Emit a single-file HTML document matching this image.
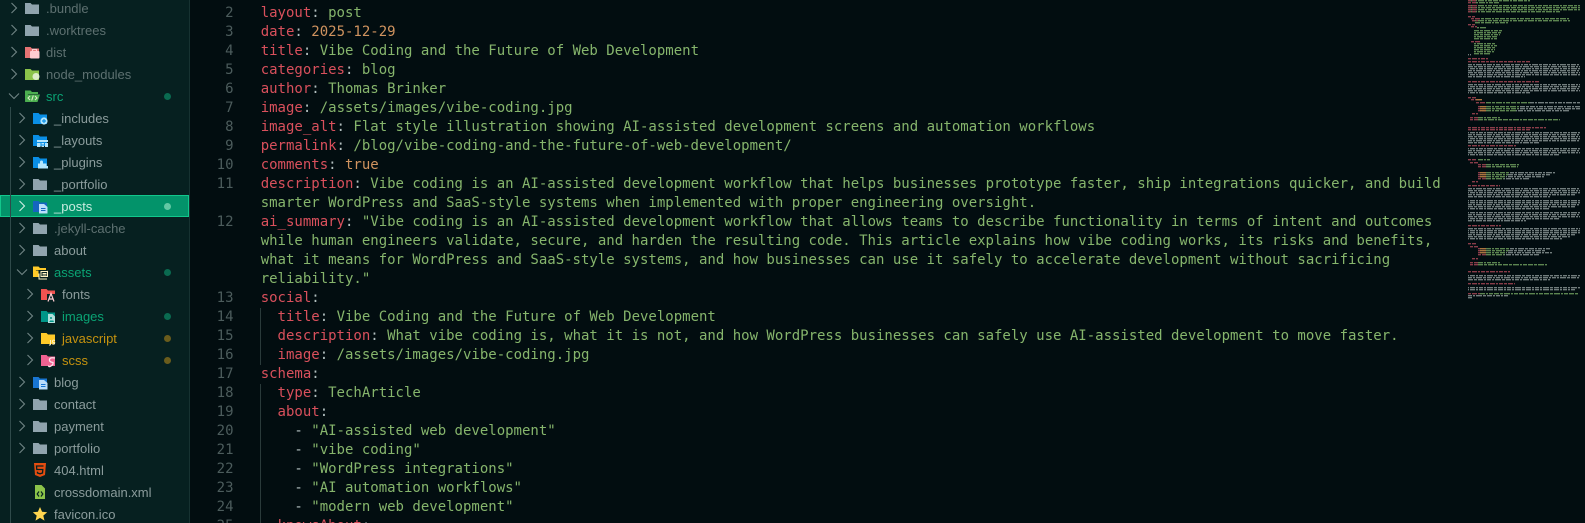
<!DOCTYPE html>
<html><head><meta charset="utf-8"><style>
html,body{margin:0;padding:0;width:1585px;height:523px;overflow:hidden;background:#020d10}
#side{position:absolute;left:0;top:0;width:189px;height:523px;background:#062020;border-right:1px solid #163231;overflow:hidden;font:13px "Liberation Sans",sans-serif;color:#8b9c9c}
.r{position:absolute;left:0;width:189px;height:22px;line-height:22px;white-space:pre;top:calc(var(--i)*22px - 3px)}
.r>svg{position:absolute;top:3px;width:16px;height:16px}
.r>svg.c{width:12px;height:12px;top:5px;fill:none;stroke:#708585;stroke-width:1.1}
.r span{position:absolute;top:1px}
.l0 .c{left:8px}.l0 .f{left:24px}.l0 span{left:46px}
.l1 .c{left:16px}.l1 .f{left:32px}.l1 span{left:54px}
.l2 .c{left:24px}.l2 .f{left:40px}.l2 span{left:62px}
.d{position:absolute;left:164px;top:7.5px;width:7px;height:7px;border-radius:50%}
.g .d{background:#0a6a50}.y .d{background:#6a5c1c}
.g span{color:#0aa374}.y span{color:#c5920f}.i span{color:#5d7070}
.sel{background:#03936a;outline:1px solid #12c78c;outline-offset:-1px;height:22px;color:#c8ece0}
.sel span{color:#c8ece0}.sel .d{background:#62c8a4}.sel>svg.c{stroke:#d0efe5}
#guide{position:absolute;left:10px;top:107px;width:1px;height:416px;background:#2f4a4a}
#ed{position:absolute;left:190px;top:0;width:1395px;height:523px;background:#020d10;overflow:hidden}
.n,.t{position:absolute;font:14px/19px "DejaVu Sans Mono",monospace;white-space:pre;top:calc(var(--i)*19px + 4px)}
.n{left:0;width:43.5px;text-align:right;color:#4c5c5c}
.t{left:70.7px;color:#86b56c}
.t b{font-weight:400;color:#d9505c}.t u{text-decoration:none;color:#b3c0c0}.t i{font-style:normal;color:#d0935f}
.ig{position:absolute;left:70px;width:1px;background:#2a3a3a}
#mini{position:absolute;left:0;top:0;filter:blur(.35px)}
</style></head><body>
<svg width="0" height="0" style="position:absolute"><defs>
<symbol id="fd" viewBox="0 0 16 16"><path d="M1 3h5.500l1.500 1.500h7v9.500H1z"/></symbol>
<symbol id="ch" viewBox="0 0 12 12"><path d="M3.500 1l5 5-5 5"/></symbol>
<symbol id="ex" viewBox="0 0 12 12"><path d="M1 3.500l5 5 5-5"/></symbol>
</defs></svg>
<div id="side">
<div class="r l0 i" style="--i:0"><svg class="c"><use href="#ch"/></svg><svg class="f" fill="#90a4ae"><use href="#fd"/></svg><span>.bundle</span></div>
<div class="r l0 i" style="--i:1"><svg class="c"><use href="#ch"/></svg><svg class="f" fill="#90a4ae"><use href="#fd"/></svg><span>.worktrees</span></div>
<div class="r l0 i" style="--i:2"><svg class="c"><use href="#ch"/></svg><svg class="f" viewBox="0 0 16 16"><path fill="#e57373" d="M1 3h5.500l1.500 1.500h7v9.500H1z"/><rect x="6" y="7" width="9.500" height="7.500" rx="1" fill="#ffcdd2"/><path d="M8.500 7V5.500h4V7" fill="none" stroke="#ffcdd2" stroke-width="1.200"/></svg><span>dist</span></div>
<div class="r l0 i" style="--i:3"><svg class="c"><use href="#ch"/></svg><svg class="f" viewBox="0 0 16 16"><path fill="#8bc34a" d="M1 3h5.500l1.500 1.500h7v9.500H1z"/><circle cx="12" cy="10.500" r="3.500" fill="#dcedc8"/></svg><span>node_modules</span></div>
<div class="r l0 g" style="--i:4"><svg class="c"><use href="#ex"/></svg><svg class="f" viewBox="0 0 16 16"><path fill="#4caf50" d="M1 2.500h5.500L8 4h6v2H4L1 14z"/><path fill="#4caf50" d="M3.500 6.500H16L13.500 14H1z"/><path d="M6 8l-2 2 2 2M11 8l2 2-2 2M9.300 7.500L7.700 12.500" fill="none" stroke="#dcedc8" stroke-width="1.100"/></svg><span>src</span><i class="d"></i></div>
<div class="r l1" style="--i:5"><svg class="c"><use href="#ch"/></svg><svg class="f" viewBox="0 0 16 16"><path fill="#0a8fe6" d="M1 3h5.500l1.500 1.500h7v9.500H1z"/><circle cx="12" cy="11" r="3.600" fill="#b3e5fc"/><path d="M10 11h4M12 9v4" stroke="#0a8fe6" stroke-width="1.200"/></svg><span>_includes</span></div>
<div class="r l1" style="--i:6"><svg class="c"><use href="#ch"/></svg><svg class="f" viewBox="0 0 16 16"><path fill="#0a8fe6" d="M1 3h5.500l1.500 1.500h7v9.500H1z"/><path fill="#b3e5fc" d="M5 8h11v2H5zM5 11h3.500v4H5zM9.500 11H12v1.500H9.500zM13 11h3v4h-3zM9.500 13.500H12V15H9.500z"/></svg><span>_layouts</span></div>
<div class="r l1" style="--i:7"><svg class="c"><use href="#ch"/></svg><svg class="f" viewBox="0 0 16 16"><path fill="#0a8fe6" d="M1 3h5.500l1.500 1.500h7v9.500H1z"/><path fill="#b3e5fc" d="M6 9.500h2V8a1.500 1.500 0 013 0v1.500h3.500V12H16v2.500H6z"/></svg><span>_plugins</span></div>
<div class="r l1" style="--i:8"><svg class="c"><use href="#ch"/></svg><svg class="f" fill="#90a4ae"><use href="#fd"/></svg><span>_portfolio</span></div>
<div class="r l1 sel" style="--i:9"><svg class="c"><use href="#ch"/></svg><svg class="f" viewBox="0 0 16 16"><path fill="#1565c0" d="M1 3h5.500l1.500 1.500h7v9.500H1z"/><path fill="#bbdefb" d="M7 6h5l3.500 3v6.500H7z"/><path d="M9 10.500h4.500M9 12.500h4.500" stroke="#1565c0"/></svg><span>_posts</span><i class="d"></i></div>
<div class="r l1 i" style="--i:10"><svg class="c"><use href="#ch"/></svg><svg class="f" fill="#90a4ae"><use href="#fd"/></svg><span>.jekyll-cache</span></div>
<div class="r l1" style="--i:11"><svg class="c"><use href="#ch"/></svg><svg class="f" fill="#90a4ae"><use href="#fd"/></svg><span>about</span></div>
<div class="r l1 g" style="--i:12"><svg class="c"><use href="#ex"/></svg><svg class="f" viewBox="0 0 16 16"><path fill="#ffca28" d="M1 2.500h5.500L8 4h6v2H4L1 13zM3.500 6.500H16l-2 6.500H1z"/><rect x="6.500" y="6" width="9" height="9" fill="#062020"/><path d="M7 9.500v5.500h8M9 7.500h6.500v5H9z" fill="none" stroke="#fff3c4"/><path d="M10.500 9.500h4M10.500 11h4" stroke="#fff3c4"/></svg><span>assets</span><i class="d"></i></div>
<div class="r l2" style="--i:13"><svg class="c"><use href="#ch"/></svg><svg class="f" viewBox="0 0 16 16"><path fill="#ef5350" d="M1 3h5.500l1.500 1.500h7v9.500H1z"/><path fill="#062020" d="M7 8h8v8H7z"/><path d="M8 15.500l3-8 3 8M9 13h4" fill="none" stroke="#ffcdd2" stroke-width="1.200"/></svg><span>fonts</span></div>
<div class="r l2 g" style="--i:14"><svg class="c"><use href="#ch"/></svg><svg class="f" viewBox="0 0 16 16"><path fill="#009688" d="M1 3h5.500l1.500 1.500h7v9.500H1z"/><path fill="#b2dfdb" d="M8 6h4.500L15 8.500V15H8z"/><circle cx="11" cy="10" r="1" fill="#009688"/><path d="M9 14l2-2 1 1 1-1 1 2" fill="#009688"/></svg><span>images</span><i class="d"></i></div>
<div class="r l2 y" style="--i:15"><svg class="c"><use href="#ch"/></svg><svg class="f" viewBox="0 0 16 16"><path fill="#ffca28" d="M1 3h5.500l1.500 1.500h7v9.500H1z"/><path d="M10.500 10v4.200q0 1-1.500.8M15 10.500q-2.500-1-2.500.8t2.200 1.400q0 2-2.400 1.300" fill="none" stroke="#fff3c4" stroke-width="1"/></svg><span>javascript</span><i class="d"></i></div>
<div class="r l2 y" style="--i:16"><svg class="c"><use href="#ch"/></svg><svg class="f" viewBox="0 0 16 16"><path fill="#f06292" d="M1 3h5.500l1.500 1.500h7v9.500H1z"/><path d="M15 6q-5-1-5.500 1.500T13 10.500q.5 2.500-3 4-1.500.3-1.500-1" fill="none" stroke="#fce4ec" stroke-width="1.300"/></svg><span>scss</span><i class="d"></i></div>
<div class="r l1" style="--i:17"><svg class="c"><use href="#ch"/></svg><svg class="f" viewBox="0 0 16 16"><path fill="#1976d2" d="M1 3h5.500l1.500 1.500h7v9.500H1z"/><path fill="#bbdefb" d="M7 6h5l3.500 3v6.500H7z"/><path d="M9 10.500h4.500M9 12.500h4.500" stroke="#1976d2"/></svg><span>blog</span></div>
<div class="r l1" style="--i:18"><svg class="c"><use href="#ch"/></svg><svg class="f" fill="#90a4ae"><use href="#fd"/></svg><span>contact</span></div>
<div class="r l1" style="--i:19"><svg class="c"><use href="#ch"/></svg><svg class="f" fill="#90a4ae"><use href="#fd"/></svg><span>payment</span></div>
<div class="r l1" style="--i:20"><svg class="c"><use href="#ch"/></svg><svg class="f" fill="#90a4ae"><use href="#fd"/></svg><span>portfolio</span></div>
<div class="r l1" style="--i:21"><svg class="f" viewBox="0 0 16 16"><path fill="#e44d10" d="M2 1h12l-1 12-5 2-5-2z"/><path d="M11.500 4h-7l.3 3.500h6l-.3 3.500-2.500.8-2.500-.8-.1-1.300" fill="none" stroke="#062020" stroke-width="1.300"/></svg><span>404.html</span></div>
<div class="r l1" style="--i:22"><svg class="f" viewBox="0 0 16 16"><path fill="#8bc34a" d="M3 1h6.500L13 4.500V15H3z"/><path d="M7 7.500L5.200 10 7 12.500M9 7.500l1.800 2.500L9 12.500" fill="none" stroke="#062020" stroke-width="1.200"/></svg><span>crossdomain.xml</span></div>
<div class="r l1" style="--i:23"><svg class="f" viewBox="0 0 16 16"><path fill="#ffd54f" d="M8 1l2.100 4.700 5.100.5-3.900 3.400 1.200 5L8 11.900l-4.500 2.700 1.200-5L.8 6.200l5.100-.5z"/></svg><span>favicon.ico</span></div>
<div id="guide"></div>
</div>
<div id="ed">
<div class="ig" style="top:308px;height:57px"></div><div class="ig" style="top:384px;height:139px"></div>
<div class="n" style="--i:0">2</div><div class="t" style="--i:0"><b>layout</b><u>:</u> post</div>
<div class="n" style="--i:1">3</div><div class="t" style="--i:1"><b>date</b><u>:</u> <i>2025-12-29</i></div>
<div class="n" style="--i:2">4</div><div class="t" style="--i:2"><b>title</b><u>:</u> Vibe Coding and the Future of Web Development</div>
<div class="n" style="--i:3">5</div><div class="t" style="--i:3"><b>categories</b><u>:</u> blog</div>
<div class="n" style="--i:4">6</div><div class="t" style="--i:4"><b>author</b><u>:</u> Thomas Brinker</div>
<div class="n" style="--i:5">7</div><div class="t" style="--i:5"><b>image</b><u>:</u> /assets/images/vibe-coding.jpg</div>
<div class="n" style="--i:6">8</div><div class="t" style="--i:6"><b>image_alt</b><u>:</u> Flat style illustration showing AI-assisted development screens and automation workflows</div>
<div class="n" style="--i:7">9</div><div class="t" style="--i:7"><b>permalink</b><u>:</u> /blog/vibe-coding-and-the-future-of-web-development/</div>
<div class="n" style="--i:8">10</div><div class="t" style="--i:8"><b>comments</b><u>:</u> <i>true</i></div>
<div class="n" style="--i:9">11</div><div class="t" style="--i:9"><b>description</b><u>:</u> Vibe coding is an AI-assisted development workflow that helps businesses prototype faster, ship integrations quicker, and build</div>
<div class="t" style="--i:10">smarter WordPress and SaaS-style systems when implemented with proper engineering oversight.</div>
<div class="n" style="--i:11">12</div><div class="t" style="--i:11"><b>ai_summary</b><u>:</u> "Vibe coding is an AI-assisted development workflow that allows teams to describe functionality in terms of intent and outcomes</div>
<div class="t" style="--i:12">while human engineers validate, secure, and harden the resulting code. This article explains how vibe coding works, its risks and benefits,</div>
<div class="t" style="--i:13">what it means for WordPress and SaaS-style systems, and how businesses can use it safely to accelerate development without sacrificing</div>
<div class="t" style="--i:14">reliability."</div>
<div class="n" style="--i:15">13</div><div class="t" style="--i:15"><b>social</b><u>:</u></div>
<div class="n" style="--i:16">14</div><div class="t" style="--i:16">  <b>title</b><u>:</u> Vibe Coding and the Future of Web Development</div>
<div class="n" style="--i:17">15</div><div class="t" style="--i:17">  <b>description</b><u>:</u> What vibe coding is, what it is not, and how WordPress businesses can safely use AI-assisted development to move faster.</div>
<div class="n" style="--i:18">16</div><div class="t" style="--i:18">  <b>image</b><u>:</u> /assets/images/vibe-coding.jpg</div>
<div class="n" style="--i:19">17</div><div class="t" style="--i:19"><b>schema</b><u>:</u></div>
<div class="n" style="--i:20">18</div><div class="t" style="--i:20">  <b>type</b><u>:</u> TechArticle</div>
<div class="n" style="--i:21">19</div><div class="t" style="--i:21">  <b>about</b><u>:</u></div>
<div class="n" style="--i:22">20</div><div class="t" style="--i:22">    <u>-</u> "AI-assisted web development"</div>
<div class="n" style="--i:23">21</div><div class="t" style="--i:23">    <u>-</u> "vibe coding"</div>
<div class="n" style="--i:24">22</div><div class="t" style="--i:24">    <u>-</u> "WordPress integrations"</div>
<div class="n" style="--i:25">23</div><div class="t" style="--i:25">    <u>-</u> "AI automation workflows"</div>
<div class="n" style="--i:26">24</div><div class="t" style="--i:26">    <u>-</u> "modern web development"</div>
<div class="n" style="--i:27">25</div><div class="t" style="--i:27">  <b>knowsAbout</b><u>:</u></div>
</div>
<svg id="mini" width="1585" height="523" fill="none" stroke-width="1.400">
<g stroke="#5c8550" stroke-dasharray="5 1 3 1 6 1 2 1 4 1">
<path d="M1468 .7H1530M1468 5.700H1580M1468 9.700H1580M1475 18.700H1570M1475 22.700H1508M1474 30.700H1502M1474 34.700H1500M1474 38.700H1497M1474 45.700H1497M1474 49.700H1495M1474 53.700H1490"/>
<path stroke-dashoffset="7" d="M1476 2.700H1500M1468 7.700H1580M1468 11.700H1560M1475 20.700H1570M1477 27.700H1487M1474 32.700H1502M1474 36.700H1498M1474 43.700H1495M1474 47.700H1495M1474 51.700H1494"/>
<path d="M1486 102.700H1530M1486 108.700H1518M1478 119.700H1560M1486 250.700H1508M1486 254.700H1504M1478 264.700H1548M1486 174.700H1508M1486 178.700H1504M1486 166.700H1518"/>
<path stroke-dashoffset="11" d="M1486 106.700H1520M1486 110.700H1516M1478 117.700H1500M1486 248.700H1510M1486 252.700H1506M1478 262.700H1500M1480 293.700H1578M1486 172.700H1510M1486 176.700H1506M1478 159.700H1490M1486 164.700H1520"/>
</g>
<g stroke="#727d7d" stroke-dasharray="4 1 2 1 6 1 3 1 5 1 2 1">
<path d="M1468 64.700H1580M1468 70.700H1580M1468 76.700H1525M1468 88.700H1580M1468 134.700H1580M1468 140.700H1580M1468 150.700H1580M1468 188.700H1580M1468 194.700H1575M1468 204.700H1580M1468 214.700H1580M1468 220.700H1526M1468 234.700H1575M1468 277.700H1580M1468 295.700H1508M1530 102.700H1580M1510 172.700H1555M1510 248.700H1550"/>
<path stroke-dashoffset="9" d="M1468 66.700H1580M1468 72.700H1580M1468 84.700H1580M1468 90.700H1580M1468 136.700H1580M1468 142.700H1540M1468 152.700H1580M1468 190.700H1580M1468 196.700H1550M1468 206.700H1575M1468 216.700H1580M1468 228.700H1580M1468 236.700H1570M1468 279.700H1550M1468 297.700H1472M1520 106.700H1580M1508 174.700H1550M1508 250.700H1545"/>
<path stroke-dashoffset="17" d="M1468 68.700H1580M1468 74.700H1580M1468 86.700H1580M1468 92.700H1530M1468 132.700H1580M1468 138.700H1580M1468 148.700H1580M1468 154.700H1560M1468 192.700H1580M1468 200.700H1580M1468 202.700H1580M1468 208.700H1550M1468 212.700H1580M1468 218.700H1560M1468 230.700H1580M1468 232.700H1580M1468 238.700H1563M1468 275.700H1580M1468 287.700H1580M1468 289.700H1575M1468 54.700H1471M1518 108.700H1580M1516 110.700H1570M1506 176.700H1545M1504 178.700H1530M1506 252.700H1552M1504 254.700H1540"/>
</g>
<g stroke="#8a3d49" stroke-dasharray="3 1 5 1 2 1 4 1">
<path d="M1468 .7H1476M1468 2.700H1476M1468 5.700H1478M1468 7.700H1476M1468 9.700H1478M1468 11.700H1476M1468 16.700H1475M1471 18.700H1480M1472 20.700H1478M1468 24.700H1475M1471 26.700H1477M1471 41.700H1480"/>
<path d="M1468 58.700H1488M1468 61.700H1530M1468 81.700H1540M1468 127.700H1546M1468 129.700H1530M1468 145.700H1516M1468 185.700H1500M1468 225.700H1501M1468 271.700H1510M1468 283.700H1515M1468 293.700H1480"/>
<path d="M1468 97.700H1476M1471 99.700H1480M1476 102.700H1486M1478 106.700H1486M1478 108.700H1486M1478 110.700H1486M1472 113.700H1478M1470 117.700H1478M1470 119.700H1478"/>
<path d="M1468 159.700H1476M1470 162.700H1478M1478 164.700H1486M1478 166.700H1486M1478 172.700H1486M1478 174.700H1486M1478 176.700H1486M1478 178.700H1486M1472 181.700H1478"/>
<path d="M1468 243.700H1476M1470 246.700H1478M1478 248.700H1486M1478 250.700H1486M1478 252.700H1486M1478 254.700H1486M1472 258.700H1478M1470 262.700H1478M1470 264.700H1478"/>
</g>
<g stroke="#a9743f"><path d="M1480 106.700H1486M1480 108.700H1486M1480 110.700H1486M1480 172.700H1486M1480 174.700H1486M1480 176.700H1486M1480 248.700H1486M1480 250.700H1486M1480 252.700H1486M1476 99.700H1482"/></g>
</svg>
</body></html>
